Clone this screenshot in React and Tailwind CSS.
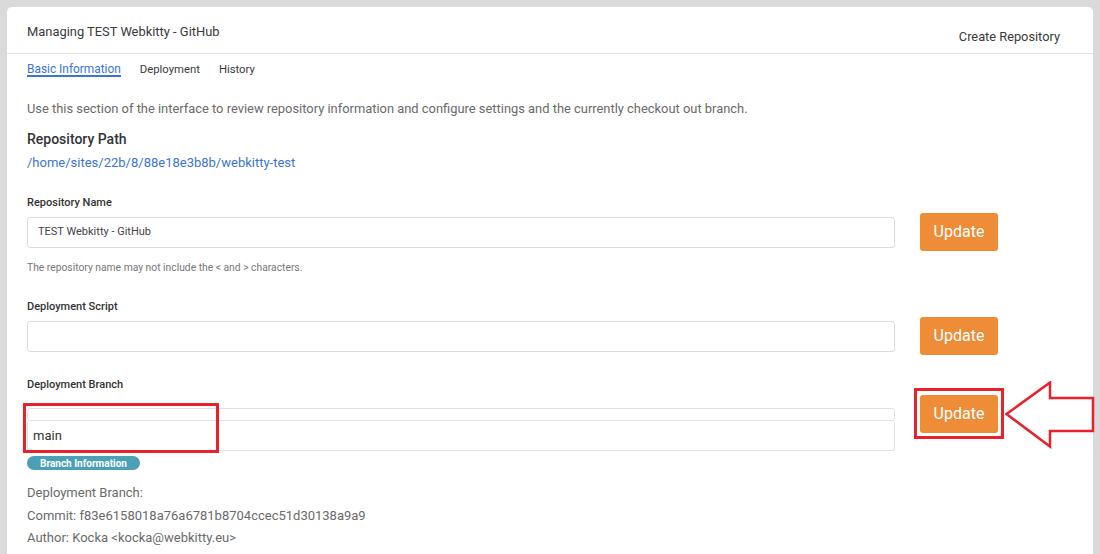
import React from "react";

const font = { fontFamily: "Roboto, 'Noto Sans', sans-serif" };

function UpdateButton({ children }) {
  return (
    <button className="h-[38px] w-[78px] rounded-[3px] bg-[#ee8c37] text-[16px] text-white">
      {children || "Update"}
    </button>
  );
}

function Field({ label, value, mt }) {
  return (
    <>
      <div className={`${mt} text-[11px] leading-[14px] font-medium text-[#333]`}>{label}</div>
      <div className="mt-[3px] flex items-center">
        <div className="flex h-[31px] flex-1 items-center rounded-[3px] border border-[#dcdcdc] bg-white px-[10px] text-[11px] text-[#444]">
          {value}
        </div>
        <div className="ml-[25px]">
          <UpdateButton />
        </div>
      </div>
    </>
  );
}

export default function App() {
  return (
    <div className="min-h-[554px] bg-[#dadada] pt-[7px] pl-[7px] pr-[7px]" style={font}>
      <div className="h-[547px] rounded-t-[5px] bg-white">
        {/* en-tête */}
        <div className="flex h-[47px] justify-between border-b border-[#e2e2e2] px-[20px]">
          <div className="pt-[17px] text-[12.9px] leading-[16px] text-[#3a3a3a]">Managing TEST Webkitty - GitHub</div>
          <div className="pt-[22px] pr-[13px] text-[12.8px] leading-[16px] text-[#3a3a3a]">Create Repository</div>
        </div>

        <div className="pl-[20px] pr-[95px]">
          {/* onglets */}
          <div className="flex gap-[19px] text-[11.3px] leading-[11px]">
            <span className="border-b-2 border-[#3b74d6] pt-[10px] text-[11.9px] text-[#3b74d6]">Basic Information</span>
            <span className="pt-[10px] text-[#3a3a3a]">Deployment</span>
            <span className="pt-[10px] text-[#3a3a3a]">History</span>
          </div>

          <p className="mt-[24px] text-[12.9px] leading-[16px] text-[#6a6a6a] whitespace-nowrap">
            Use this section of the interface to review repository information and configure settings and the currently checkout out branch.
          </p>

          <div className="mt-[13px] text-[14px] leading-[18px] font-medium text-[#333]">Repository Path</div>
          <div className="mt-[7px] text-[13px] leading-[16px] text-[#3b74d6]">/home/sites/22b/8/88e18e3b8b/webkitty-test</div>

          <Field label="Repository Name" value="TEST Webkitty - GitHub" mt="mt-[25px]" />
          <div className="mt-[11px] text-[10.3px] leading-[12px] text-[#777]">
            The repository name may not include the &lt; and &gt; characters.
          </div>

          <Field label="Deployment Script" value="" mt="mt-[26px]" />

          <div className="mt-[23px] text-[11px] leading-[14px] font-medium text-[#333]">Deployment Branch</div>
          <div className="mt-[3px] flex items-start">
            <div className="relative mt-[13px] flex-1">
              <div className="h-[13px] rounded-[3px] border border-[#e0e0e0]"></div>
              <div className="flex h-[30px] items-center rounded-[3px] border border-[#e0e0e0] border-t-0 px-[5px] text-[13px] text-[#333]">
                main
              </div>
              {/* annotation */}
              <div className="absolute left-[-4px] top-[-5px] h-[50px] w-[196px] border-[3px] border-[#e8212b]"></div>
            </div>
            <div className="relative ml-[25px]">
              <UpdateButton />
              <div className="absolute -left-[6px] -right-[6px] -top-[7px] -bottom-[6px] border-[3px] border-[#e8212b]"></div>
              <svg className="absolute left-[85px] top-[-14px]" width="90" height="68" viewBox="0 0 90 68">
                <path d="M1.5 33 L45 1.5 L45 17 L88 17 L88 50 L45 50 L45 65.5 Z" fill="white" stroke="#e8212b" strokeWidth="2.5" strokeLinejoin="miter" />
              </svg>
            </div>
          </div>

          <div className="mt-[5px] flex h-[14px] w-[113px] items-center justify-center rounded-full bg-[#4ba0b7] text-[10px] font-bold text-white">
            Branch Information
          </div>

          <div className="mt-[12px] text-[13px] leading-[22.5px] text-[#6a6a6a]">
            <div>Deployment Branch:</div>
            <div>Commit: f83e6158018a76a6781b8704ccec51d30138a9a9</div>
            <div>Author: Kocka &lt;kocka@webkitty.eu&gt;</div>
          </div>
        </div>
      </div>
    </div>
  );
}
